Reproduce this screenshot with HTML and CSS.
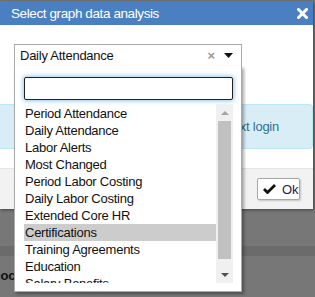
FILE: index.html
```html
<!DOCTYPE html>
<html lang="en">
<head>
  <meta charset="UTF-8" />
  <title>Select graph data analysis</title>
  <link rel="stylesheet" href="styles.css">
</head>
<body>

  <div class="page">
    <div class="page-top"></div>
    <div class="page-band"></div>
    <div class="page-row">Documents</div>
    <div class="page-tick"></div>
  </div>

  <div class="dialog">
    <div class="dialog-header">
      <span class="dialog-title">Select graph data analysis</span>
      <svg class="close-icon" width="11" height="11" viewBox="0 0 11 11">
        <path d="M1.5 1.5 L9.5 9.5 M9.5 1.5 L1.5 9.5" stroke="#fff" stroke-width="3" stroke-linecap="square"/>
      </svg>
    </div>
    <div class="dialog-body">
      <div class="select-box">
        <span class="select-value">Daily Attendance</span>
        <span class="select-clear">&times;</span>
        <svg class="select-arrow" width="9" height="5" viewBox="0 0 9 5"><path d="M0 0 L9 0 L4.5 5 Z" fill="#111"/></svg>
      </div>
      <div class="info-box">Changes apply from your next login</div>
    </div>
    <div class="dialog-footer">
      <button class="ok-btn">
        <svg width="13" height="10" viewBox="0 0 13 10"><path d="M1 5 L4.5 8.5 L12 1" stroke="#111" stroke-width="2.8" fill="none"/></svg>
        <span>Ok</span>
      </button>
    </div>
  </div>

  <div class="dropdown">
    <input type="text" class="dropdown-search" autofocus />
    <div class="dropdown-list">
      <ul class="options">
        <li>Period Attendance</li>
        <li>Daily Attendance</li>
        <li>Labor Alerts</li>
        <li>Most Changed</li>
        <li>Period Labor Costing</li>
        <li>Daily Labor Costing</li>
        <li>Extended Core HR</li>
        <li class="active">Certifications</li>
        <li>Training Agreements</li>
        <li>Education</li>
        <li>Salary Benefits</li>
      </ul>
      <div class="scrollbar">
        <div class="scroll-btn"><span class="arrow-up"></span></div>
        <div class="scroll-track"><div class="scroll-thumb"></div></div>
        <div class="scroll-btn"><span class="arrow-down"></span></div>
      </div>
    </div>
  </div>

</body>
</html>
```

FILE: styles.css
```css
* {
  margin: 0;
  padding: 0;
  box-sizing: border-box;
  font-family: 'Liberation Sans', Arial, sans-serif;
}

body {
  width: 315px;
  height: 297px;
  background-color: #777777;
  overflow: hidden;
  position: relative;
}

/* page behind the modal overlay */
.page {
  display: flex;
  flex-direction: column;
}

.page-top {
  height: 246px;
}

.page-band {
  height: 10px;
  background-color: #6b6b6b;
}

.page-row {
  height: 30px;
  padding-top: 12px;
  font-size: 13px;
  font-weight: bold;
  color: #111;
  text-indent: -9px;
}

.page-tick {
  margin-left: 196px;
  width: 6px;
  height: 2px;
  background-color: #333;
}

/* modal */
.dialog {
  position: absolute;
  top: 1px;
  left: 0;
  width: 313px;
  background-color: #fff;
  box-shadow: 1px 1px 3px rgba(0, 0, 0, 0.45);
}

.dialog-header {
  height: 24px;
  background-color: #4a80c1;
  display: flex;
  align-items: center;
  justify-content: space-between;
  padding: 0 5px 0 11px;
}

.dialog-title {
  color: #fff;
  font-size: 13.5px;
  letter-spacing: -0.4px;
}

.dialog-body {
  height: 143px;
  padding-top: 19px;
}

.select-box {
  margin-left: 14px;
  width: 228px;
  height: 22px;
  border: 1px solid #aaa;
  border-bottom: none;
  display: flex;
  align-items: center;
  padding: 0 8px 0 5px;
}

.select-value {
  flex: 1;
  font-size: 13px;
  letter-spacing: -0.25px;
  color: #111;
}

.select-clear {
  color: #999;
  font-size: 13px;
  font-weight: bold;
  margin-right: 9px;
}

.info-box {
  margin-top: 38px;
  height: 45px;
  background-color: #d9edf7;
  border: 1px solid #bce8f1;
  border-left: none;
  border-radius: 0 4px 4px 0;
  color: #31708f;
  font-size: 13px;
  letter-spacing: -0.25px;
  text-align: right;
  padding: 14px 33px 0 0;
}

.dialog-footer {
  height: 41px;
  background-color: #f2f2f2;
  border-top: 1px solid #e3e3e3;
  display: flex;
  justify-content: flex-end;
  align-items: center;
  padding-right: 13px;
}

.ok-btn {
  display: flex;
  align-items: center;
  gap: 6px;
  height: 22px;
  width: 43px;
  padding-left: 5px;
  background-color: #fff;
  border: 1px solid #a8a8a8;
  border-radius: 2px;
  box-shadow: 1px 1px 2px rgba(0, 0, 0, 0.2);
  font-size: 13px;
  color: #1a1a4a;
}

/* open select dropdown */
.dropdown {
  position: absolute;
  top: 66px;
  left: 14px;
  width: 228px;
  height: 226px;
  background-color: #fff;
  border: 1px solid #aaa;
  border-top: none;
  box-shadow: 2px 2px 3px rgba(0, 0, 0, 0.35);
  padding: 11px 8px 0 9px;
}

.dropdown-search {
  display: block;
  width: 209px;
  height: 23px;
  border: 1px solid #222;
  border-radius: 2px;
  outline: none;
  box-shadow: 0 0 4px 1px rgba(102, 175, 233, 0.7);
  font-size: 13px;
  padding: 0 4px;
}

.dropdown-list {
  display: flex;
  margin-top: 4px;
  height: 179px;
}

.options {
  list-style: none;
  width: 192px;
  overflow: hidden;
  padding-top: 1px;
}

.options li {
  height: 17px;
  line-height: 17px;
  font-size: 13px;
  letter-spacing: -0.25px;
  color: #111;
  padding-left: 1px;
  white-space: nowrap;
}

.options li.active {
  background-color: #cccccc;
}

.scrollbar {
  width: 17px;
  background-color: #f0f0f0;
  display: flex;
  flex-direction: column;
}

.scroll-btn {
  height: 17px;
  display: flex;
  justify-content: center;
  align-items: center;
}

.arrow-up,
.arrow-down {
  width: 0;
  height: 0;
  border-left: 4px solid transparent;
  border-right: 4px solid transparent;
}

.arrow-up {
  border-bottom: 4px solid #a3a3a3;
}

.arrow-down {
  border-top: 4px solid #505050;
}

.scroll-track {
  flex: 1;
  padding: 0 2px;
}

.scroll-thumb {
  height: 138px;
  background-color: #c1c1c1;
}
```
